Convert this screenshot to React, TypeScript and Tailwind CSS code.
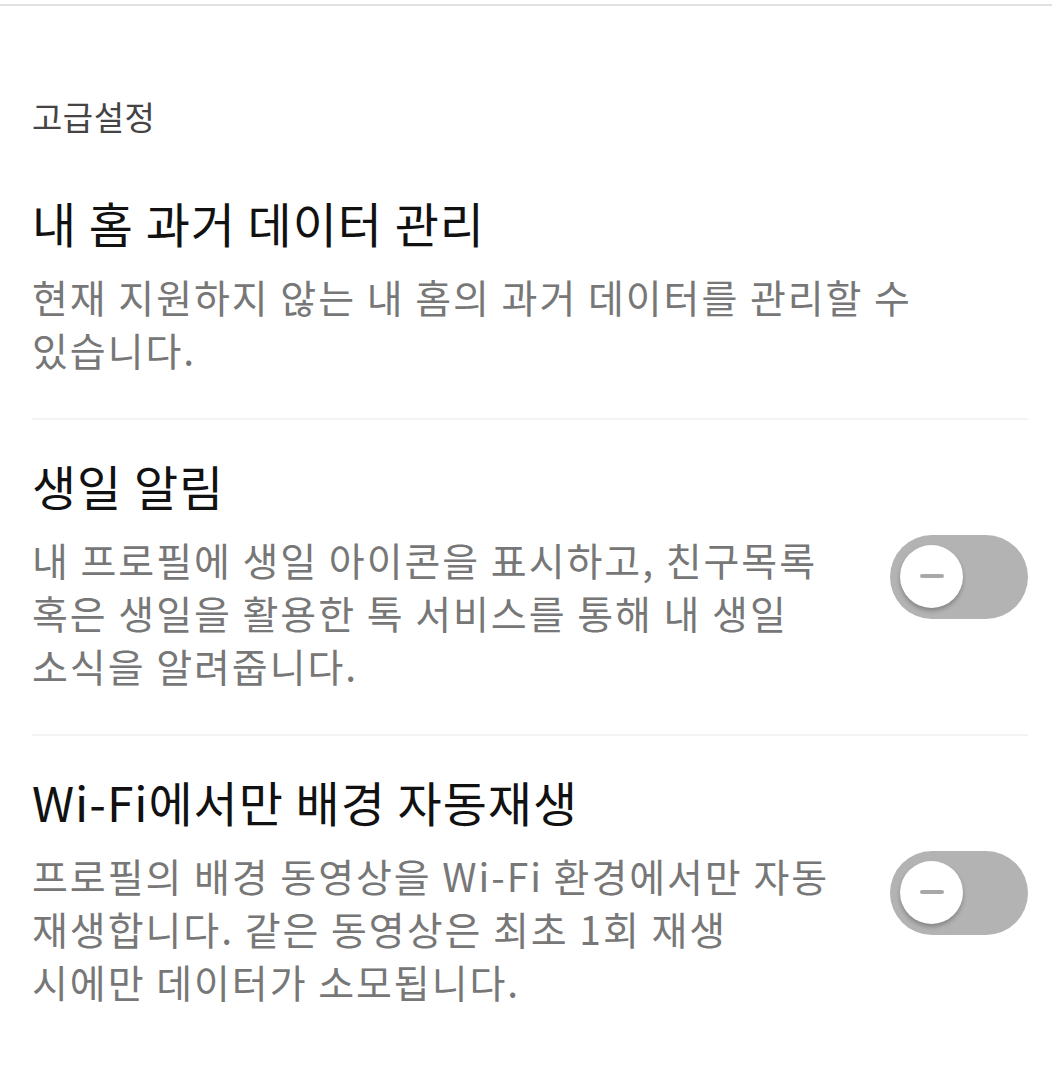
import React, { useState } from "react";

type Opcao = {
  id: string;
  titulo: string;
  descricao: string;
  toggle?: boolean;
};

const opcoes: Opcao[] = [
  {
    id: "history",
    titulo: "내 홈 과거 데이터 관리",
    descricao: "현재 지원하지 않는 내 홈의 과거 데이터를 관리할 수 있습니다.",
  },
  {
    id: "birthday",
    titulo: "생일 알림",
    descricao:
      "내 프로필에 생일 아이콘을 표시하고, 친구목록 혹은 생일을 활용한 톡 서비스를 통해 내 생일 소식을 알려줍니다.",
    toggle: true,
  },
  {
    id: "wifi",
    titulo: "Wi-Fi에서만 배경 자동재생",
    descricao:
      "프로필의 배경 동영상을 Wi-Fi 환경에서만 자동 재생합니다. 같은 동영상은 최초 1회 재생 시에만 데이터가 소모됩니다.",
    toggle: true,
  },
];

// Switch desligado: trilho cinza com botão branco e traço
const Switch: React.FC<{ ligado: boolean; onChange: () => void }> = ({ ligado, onChange }) => (
  <button
    onClick={onChange}
    className={`relative shrink-0 mt-[8px] w-[138px] h-[84px] rounded-full ${ligado ? "bg-[#fee500]" : "bg-[#b3b3b3]"}`}
  >
    <span
      className={`absolute top-[10px] ${ligado ? "left-[65px]" : "left-[10px]"} w-[63px] h-[63px] rounded-full bg-white shadow-[0_3px_4px_rgba(0,0,0,0.25)] flex items-center justify-center`}
    >
      <span className="block w-[24px] h-[4px] rounded-sm bg-[#a8a8a8]" />
    </span>
  </button>
);

export default function App() {
  const [estado, setEstado] = useState<Record<string, boolean>>({});

  return (
    <div
      className="min-h-screen bg-white"
      style={{ fontFamily: '"Noto Sans CJK KR", "Noto Sans", sans-serif' }}
    >
      <div className="h-[4px]" />
      <div className="h-[2px] bg-[#e2e2e2]" />

      <div className="pl-[32px] pr-[24px]">
        <div className="mt-[90px] text-[33px] leading-[40px] tracking-[0.5px] text-[#444]">고급설정</div>

        {opcoes.map((opcao, i) => (
          <div key={opcao.id}>
            {i > 0 && <div className="h-[2px] bg-[#f3f3f3]" />}
            <div className={`flex items-center ${i === 0 ? "pt-[54px]" : "pt-[33px]"} pb-[42px]`}>
              <div className={`flex-1 break-keep ${opcao.toggle ? "pr-[50px]" : "pr-[110px]"}`}>
                <div className="text-[48px] leading-[64px] tracking-[0.02em] text-[#111]">{opcao.titulo}</div>
                <p className="mt-[16px] text-[39px] leading-[53px] tracking-[0.05em] text-[#777]">
                  {opcao.descricao}
                </p>
              </div>
              {opcao.toggle && (
                <Switch
                  ligado={!!estado[opcao.id]}
                  onChange={() => setEstado((s) => ({ ...s, [opcao.id]: !s[opcao.id] }))}
                />
              )}
            </div>
          </div>
        ))}
      </div>
    </div>
  );
}
